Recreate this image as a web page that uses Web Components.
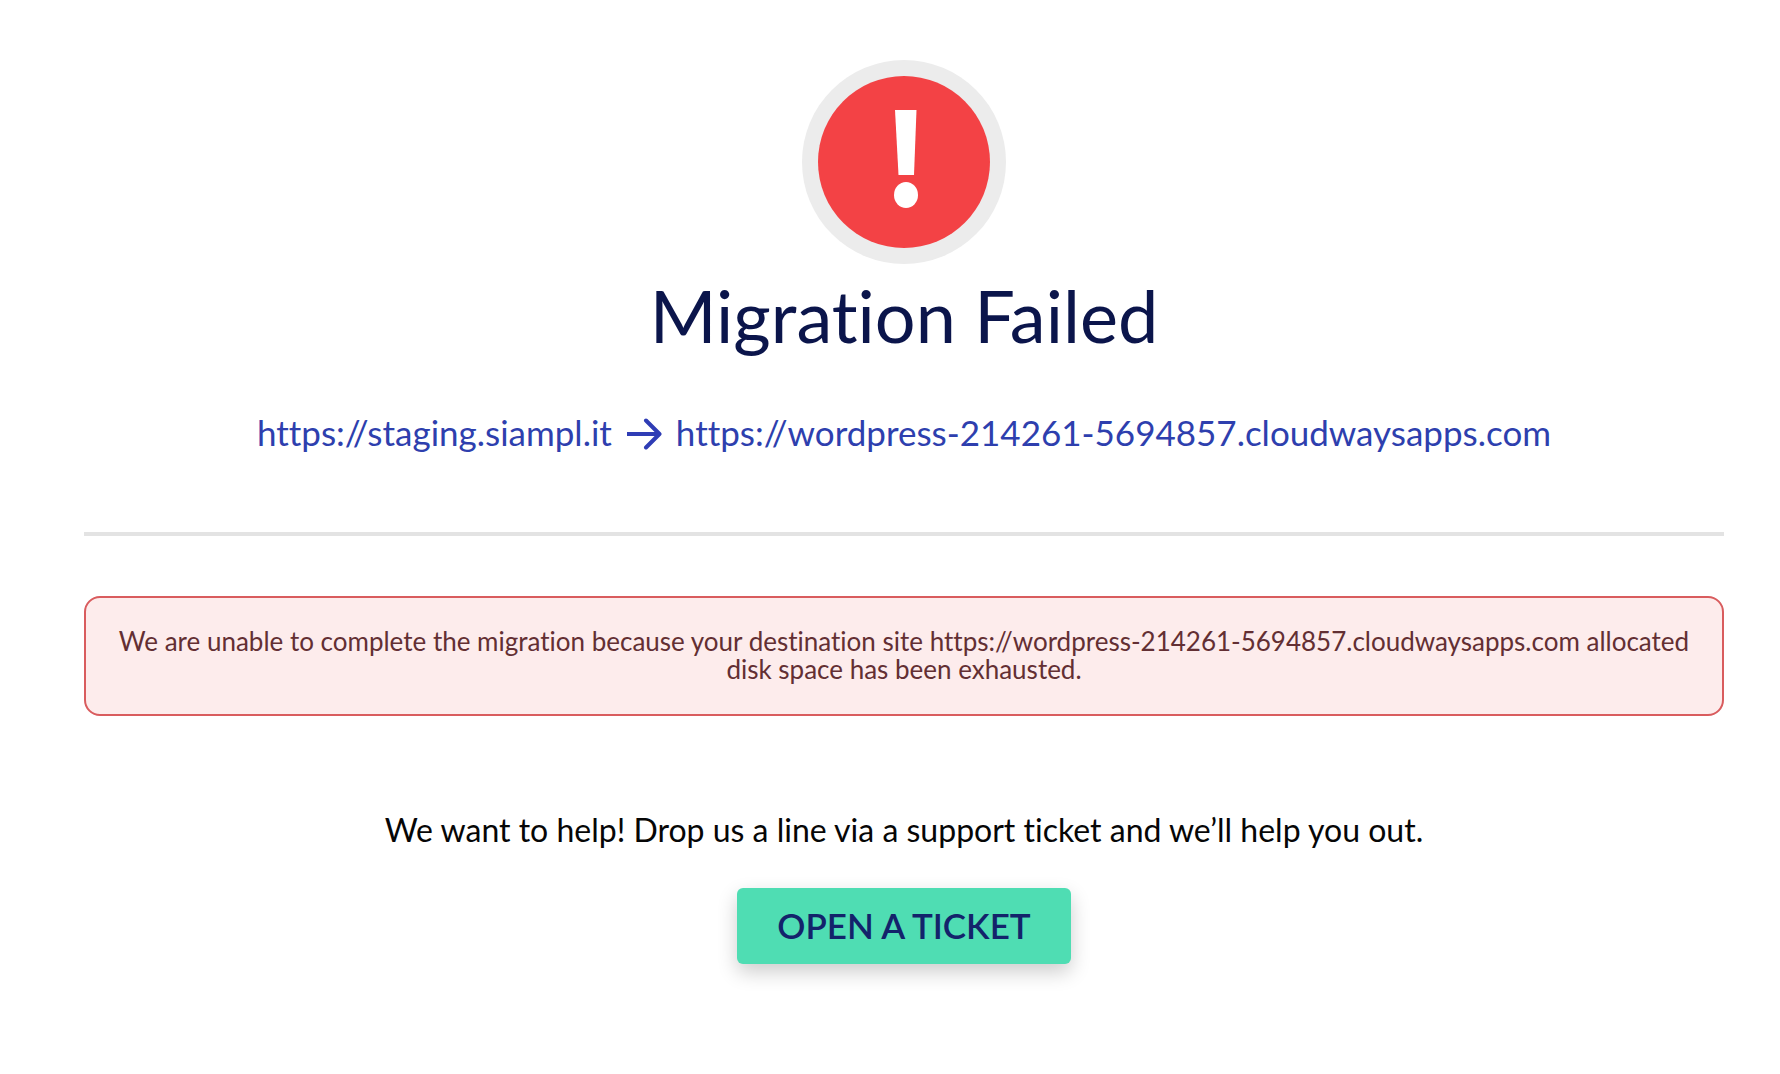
<!DOCTYPE html>
<html lang="en">
<head>
<meta charset="utf-8">
<title>Migration Failed</title>
<style>
  body {
    margin: 0;
    background: #fff;
    color: #060606;
    font-family: Lato, "Liberation Sans", sans-serif;
    font-variant-ligatures: none;
  }
</style>
</head>
<body>
<migration-result>
  <status-icon slot="icon"></status-icon>
  <span slot="title">Migration Failed</span>
  <migration-route slot="route" from="https://staging.siampl.it" to="https://wordpress-214261-5694857.cloudwaysapps.com"></migration-route>
  <error-notice>We are unable to complete the migration because your destination site https://wordpress-214261-5694857.cloudwaysapps.com allocated disk space has been exhausted.</error-notice>
  <support-prompt>
    We want to help! Drop us a line via a support ticket and we’ll help you out.
    <span slot="action">OPEN A TICKET</span>
  </support-prompt>
</migration-result>

<script>
class BaseElement extends HTMLElement {
  constructor() {
    super();
    this.attachShadow({ mode: 'open' }).innerHTML = this.constructor.markup;
  }
}

customElements.define('migration-result', class extends BaseElement {
  static markup = `
    <style>
      :host { display: block; padding: 60px 56px 60px 84px; }
      main, header { display: flex; flex-direction: column; }
      header { align-items: center; text-align: center; }
      h1 { margin: 8px 0 52px; font-size: 72px; line-height: 86px; font-weight: 400; color: #0b154b; }
      hr { width: 100%; height: 4px; margin: 78px 0 60px; border: 0; background: #e3e3e3; }
    </style>
    <main>
      <header>
        <slot name="icon"></slot>
        <h1><slot name="title"></slot></h1>
        <slot name="route"></slot>
      </header>
      <hr>
      <slot></slot>
    </main>`;
});

customElements.define('status-icon', class extends BaseElement {
  static markup = `
    <style>
      :host { display: block; width: 204px; height: 204px; }
      svg { display: block; width: 100%; height: 100%; }
    </style>
    <svg viewBox="0 0 204 204" role="img" aria-label="Error">
      <circle cx="102" cy="102" r="102" fill="#ececec"/>
      <circle cx="102" cy="102" r="86" fill="#f34245"/>
      <path d="M93 50h21.500l-2.500 65h-15.500z" fill="#fff"/>
      <ellipse cx="104" cy="135" rx="12" ry="13" fill="#fff"/>
    </svg>`;
});

customElements.define('migration-route', class extends BaseElement {
  static markup = `
    <style>
      :host { display: flex; flex-wrap: wrap; align-items: center; justify-content: center; gap: 14px; font-size: 35px; line-height: 44px; color: #2e3fae; }
      a { color: inherit; text-decoration: none; }
      svg { display: block; width: 36px; height: 32px; margin-top: 4px; }
    </style>
    <a id="from"></a>
    <svg viewBox="0 0 36 32" fill="none" stroke="#2f3db5" stroke-width="4" aria-hidden="true">
      <path d="M1 16h32"/>
      <path d="M20 2.500L33.500 16L20 29.500" stroke-linecap="round" stroke-linejoin="round"/>
    </svg>
    <a id="to"></a>`;
  connectedCallback() {
    for (const end of ['from', 'to']) {
      const link = this.shadowRoot.getElementById(end);
      link.href = link.textContent = this.getAttribute(end);
    }
  }
});

customElements.define('error-notice', class extends BaseElement {
  static markup = `
    <style>
      :host { display: block; padding: 29px 30px 31px; border: 2px solid #d95c5e; border-radius: 16px; background: #fdecec; color: #632f33; font-size: 26px; line-height: 28px; text-align: center; }
      p { margin: 0; }
    </style>
    <p role="alert"><slot></slot></p>`;
});

customElements.define('support-prompt', class extends BaseElement {
  static markup = `
    <style>
      :host { display: flex; flex-direction: column; align-items: center; gap: 38px; margin-top: 94px; text-align: center; }
      p { margin: 0; font-size: 32px; line-height: 40px; }
      button { padding: 15px 40px 17px; border: 0; border-radius: 6px; background: #4fddb3; color: #13236b; font: inherit; font-size: 35px; line-height: 44px; font-weight: 600; box-shadow: 0 8px 20px rgba(0, 0, 0, .2); cursor: pointer; }
    </style>
    <p><slot></slot></p>
    <button type="button"><slot name="action"></slot></button>`;
});
</script>
</body>
</html>
